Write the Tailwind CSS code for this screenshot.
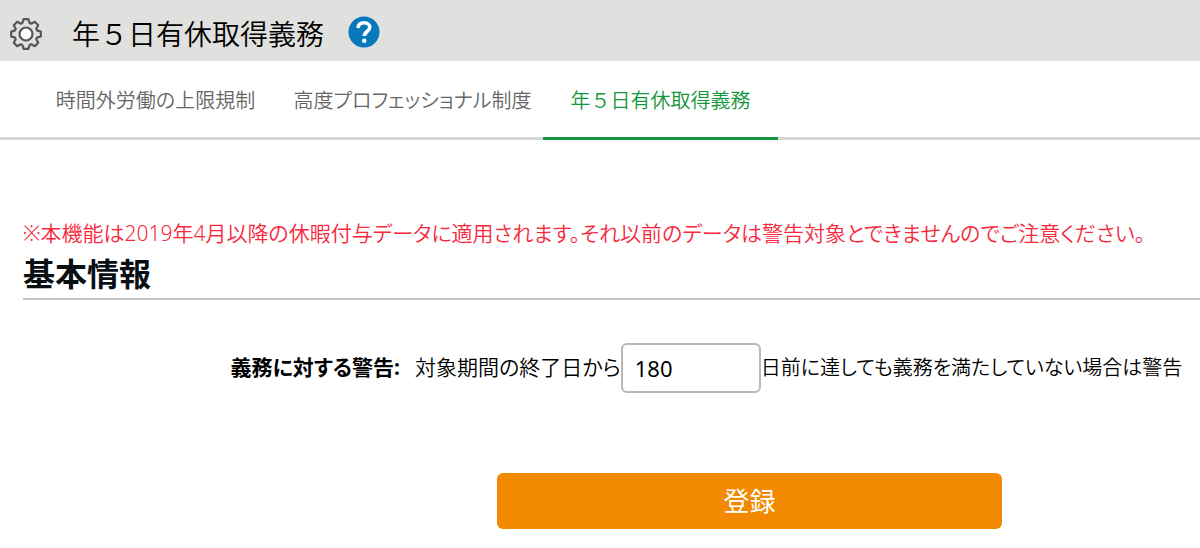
<!DOCTYPE html>
<html lang="ja">
  <head>
    <meta charset="UTF-8" />
    <meta name="viewport" content="width=device-width, initial-scale=1.0" />
    <script src="https://cdn.jsdelivr.net/npm/@tailwindcss/browser@4"></script>
    <title>年５日有休取得義務</title>
    <style>
      body {
        font-family: "Noto Sans", "Noto Sans CJK JP", sans-serif;
        font-feature-settings: "palt";
      }
    </style>
  </head>

  <body class="bg-white text-black text-[21px] font-[350] whitespace-nowrap overflow-x-hidden">
    <!-- Header -->
    <header class="flex items-center h-[61px] pt-1.5 px-2 bg-[#e0e0de]">
      <svg class="size-9" viewBox="-18 -18 36 36" fill="none" stroke="#555" stroke-width="2.2" stroke-linejoin="round" aria-hidden="true">
        <path
          d="M-3.6-11L-2.4-14.8H2.4L3.6-11L5.2-10.3L8.8-12.2L12.2-8.8L10.3-5.2L11-3.6L14.8-2.4V2.4L11 3.6L10.3 5.2L12.2 8.8L8.8 12.2L5.2 10.3L3.6 11L2.4 14.8H-2.4L-3.6 11L-5.2 10.3L-8.8 12.2L-12.2 8.8L-10.3 5.2L-11 3.6L-14.8 2.4V-2.4L-11-3.6L-10.3-5.2L-12.2-8.8L-8.8-12.2L-5.2-10.3Z"
        />
        <circle r="6.5" fill="#fff" />
      </svg>
      <h1 class="ml-7 text-[28px] leading-10 font-[350] [font-feature-settings:normal]">年５日有休取得義務</h1>
      <a href="#" class="ml-6 mb-1" aria-label="ヘルプ">
        <svg class="size-8" viewBox="0 0 32 32" fill="none" aria-hidden="true">
          <circle cx="16" cy="16" r="15.5" fill="#0878bc" />
          <path d="M10 12C10.3 8.6 12.6 6.8 16 6.8C19.4 6.8 21.8 8.6 21.8 11.5C21.8 15.2 16.4 15.4 16.4 20" stroke="#fff" stroke-width="3.6" />
          <circle cx="16.3" cy="24.7" r="2.2" fill="#fff" />
        </svg>
      </a>
    </header>

    <!-- Tabs -->
    <nav class="grid grid-cols-[253px_261px_235px] pl-[29px] border-b-3 border-[#d6d6d6] text-[20px] leading-7 text-center text-[#666]">
      <a href="#" class="pt-[26px] pb-[22px]">時間外労働の上限規制</a>
      <a href="#" class="pt-[26px] pb-[22px]">高度プロフェッショナル制度</a>
      <a href="#" class="-mb-[3px] pt-[26px] pb-[22px] border-b-3 border-[#14963c] text-[#14963c] [font-feature-settings:normal]" aria-current="page">年５日有休取得義務</a>
    </nav>

    <!-- Basic information -->
    <main class="pt-20">
      <section class="pl-[23px]">
        <p class="leading-[26px] text-[#f8283c]">
          ※本機能は2019年4月以降の休暇付与データに適用されます。それ以前のデータは警告対象とできませんのでご注意ください。
        </p>
        <h2 class="pt-1.5 pb-0.5 border-b-2 border-[#c4c4c4] text-[32px] leading-[44px] font-bold text-[#0a0f14]">基本情報</h2>
      </section>

      <form>
        <div class="flex items-center mt-[43px]">
          <label for="days" class="shrink-0 w-1/3 text-right font-bold">義務に対する警告:</label>
          <div class="flex items-center ml-[15px]">
            <span>対象期間の終了日から</span>
            <input id="days" type="text" value="180" class="shrink-0 w-[140px] h-[50px] px-3 border-2 border-[#b8b8b8] rounded-md bg-white text-[22px] font-normal" />
            <span class="text-[20px]">日前に達しても義務を満たしていない場合は警告</span>
          </div>
        </div>

        <div class="grid grid-cols-[497fr_505fr_198fr] mt-20">
          <button type="submit" class="col-start-2 h-14 rounded-md bg-[#f38900] text-[26px] font-normal text-white">登録</button>
        </div>
      </form>
    </main>
  </body>
</html>
